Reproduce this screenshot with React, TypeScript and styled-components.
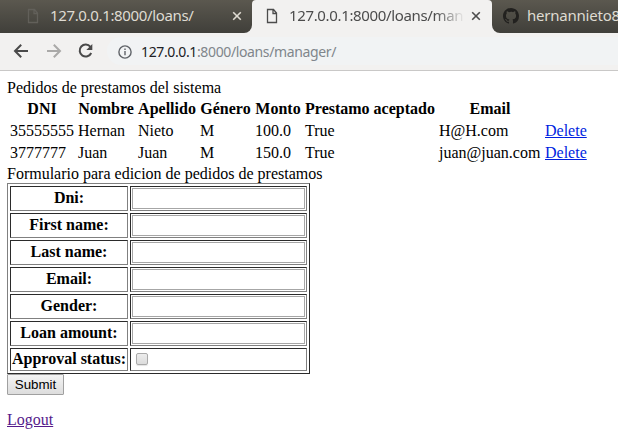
import React from "react";
import styled, { createGlobalStyle } from "styled-components";

const Global = createGlobalStyle`
  body { margin: 0; background: #fff; overflow: hidden; }
  #root { width: 618px; }
`;

const Window = styled.div`
  width: 618px;
  height: 448px;
  overflow: hidden;
  font: 16px/18px "Liberation Serif", serif;
  color: #000;
`;

const TabStrip = styled.div`
  display: flex;
  height: 33px;
  background: #f2f1f0;
`;

const Tab = styled.div<{ $width: number; $pad: number; $active?: boolean; $corners: string }>`
  box-sizing: border-box;
  flex: none;
  display: flex;
  align-items: center;
  width: ${(p) => p.$width}px;
  padding-left: ${(p) => p.$pad}px;
  padding-bottom: 1px;
  border-radius: ${(p) => p.$corners};
  background: ${(p) => (p.$active ? "#f2f1f0" : "linear-gradient(#5b584f, #403f3a)")};
  color: ${(p) => (p.$active ? "#4c4c4c" : "#dfdbd2")};
`;

const ActiveBack = styled.div`
  flex: none;
  display: flex;
  background: linear-gradient(#5b584f 0 8px, #f2f1f0 8px);
`;

const TabTitle = styled.span<{ $width: number; $spacing: number; $fade?: boolean }>`
  flex: none;
  width: ${(p) => p.$width}px;
  padding-bottom: 2px;
  overflow: hidden;
  white-space: nowrap;
  font: 15px/20px "Noto Sans", sans-serif;
  letter-spacing: ${(p) => p.$spacing}px;
  ${(p) => p.$fade && "mask-image: linear-gradient(to right, #000 146px, transparent 176px);"}
`;

const TabIcon = styled.svg<{ $gap: number }>`
  flex: none;
  margin-right: ${(p) => p.$gap}px;
`;

const Toolbar = styled.div`
  box-sizing: border-box;
  display: flex;
  align-items: center;
  height: 38px;
  padding: 0 0 1px 13px;
  border-bottom: 1px solid #c9c8c7;
  background: #f2f1f0;
`;

const NavIcon = styled.svg<{ $gap: number }>`
  flex: none;
  margin-right: ${(p) => p.$gap}px;
`;

const AddressBar = styled.div`
  display: flex;
  align-items: center;
  flex: 1;
  height: 28px;
  padding-left: 11px;
  border-radius: 14px 0 0 14px;
  background: #f1f3f4;
`;

const InfoIcon = styled.svg`
  flex: none;
  margin-top: 1px;
`;

const Address = styled.span`
  margin-left: 9px;
  padding-top: 2px;
  font: 14px/20px "Noto Sans", sans-serif;
  letter-spacing: -0.37px;
  color: #80868b;
`;

const Host = styled.span`
  color: #202124;
`;

const Page = styled.main`
  padding: 8px 7px 0;
`;

const LoanTable = styled.table`
  table-layout: fixed;
  width: 585px;
  border-spacing: 2px;
  td, th { padding: 1px; white-space: nowrap; }
`;

const Column = styled.col<{ $width: number }>`
  width: ${(p) => p.$width}px;
`;

const FormTable = styled.table`
  box-sizing: border-box;
  width: 303px;
  table-layout: fixed;
  border: 1px solid;
  border-color: #808080 #2b2b2b #2b2b2b #808080;
  border-spacing: 2px;
`;

const LabelCell = styled.th<{ $short?: boolean }>`
  box-sizing: border-box;
  width: 118px;
  height: ${(p) => (p.$short ? 23 : 25)}px;
  padding: ${(p) => (p.$short ? "0 0 1px" : "0 0 2px")};
  border: 1px solid;
  border-color: #2b2b2b #808080 #808080 #2b2b2b;
  line-height: 18px;
  white-space: nowrap;
`;

const FieldCell = styled.td`
  box-sizing: border-box;
  padding: 1px;
  border: 1px solid;
  border-color: #2b2b2b #808080 #808080 #2b2b2b;
`;

const TextField = styled.input`
  display: block;
  box-sizing: border-box;
  width: 173px;
  height: 21px;
  margin: 0;
  padding: 1px;
  border: 1px solid #a6a6a6;
  background: #fff;
  outline: none;
`;

const Checkbox = styled.input`
  appearance: none;
  display: block;
  box-sizing: border-box;
  width: 12px;
  height: 12px;
  margin: 0 0 1px 4px;
  border: 1px solid #aaa;
  border-radius: 2px;
  background: linear-gradient(#ededed, #dcdcdc);
  box-shadow: 0 1px 1px #e4e4e4;
`;

const Submit = styled.button`
  display: block;
  box-sizing: border-box;
  width: 57px;
  height: 21px;
  margin: 0 0 16px;
  padding: 0;
  border: 1px solid #a0a0a0;
  border-radius: 1px;
  background: linear-gradient(#f4f4f4, #dddddd);
  font: 13.333px/17px "Liberation Sans", sans-serif;
  color: #000;
`;

const Link = styled.a<{ $visited?: boolean }>`
  color: ${(p) => (p.$visited ? "#551a8b" : "#001fe0")};
  text-decoration: underline;
`;

const PageIcon = ({ color, gap }: { color: string; gap: number }) => (
  <TabIcon $gap={gap} width="12" height="16" viewBox="0 0 12 16" fill="none" stroke={color} strokeWidth="1.3">
    <path d="M1.5 1.5h6l3 3.5v9.5h-9zM7 1.5v4h3.5" />
  </TabIcon>
);

const CloseIcon = () => (
  <svg width="10" height="10" viewBox="0 0 10 10" stroke="currentColor" strokeWidth="1.6">
    <path d="M1.2 1.2l7.6 7.6M8.8 1.2l-7.6 7.6" />
  </svg>
);

const loans = [
  ["35555555", "Hernan", "Nieto", "M", "100.0", "True", "H@H.com"],
  ["3777777", "Juan", "Juan", "M", "150.0", "True", "juan@juan.com"],
];
const headings = ["DNI", "Nombre", "Apellido", "Género", "Monto", "Prestamo aceptado", "Email"];
const columnWidths = [66, 58, 60, 53, 48, 132, 104, 46];
const fields = ["Dni:", "First name:", "Last name:", "Email:", "Gender:", "Loan amount:"];

export default function App() {
  return (
    <Window>
      <Global />
      <TabStrip>
        <Tab $width={252} $pad={27} $corners="0 0 8px 0">
          <PageIcon color="#62605a" gap={11} />
          <TabTitle $width={182} $spacing={-0.35}>127.0.0.1:8000/loans/</TabTitle>
          <CloseIcon />
        </Tab>
        <ActiveBack>
          <Tab $width={240} $pad={14} $active $corners="4px 4px 0 0">
            <PageIcon color="#4c4c4c" gap={11} />
            <TabTitle $width={182} $spacing={-0.35} $fade>127.0.0.1:8000/loans/man</TabTitle>
            <CloseIcon />
          </Tab>
        </ActiveBack>
        <Tab $width={126} $pad={11} $corners="0 0 0 8px">
          <TabIcon $gap={8} width="16" height="16" viewBox="0 0 16 16" fill="#22211f">
            <path d="M8 0C3.58 0 0 3.58 0 8c0 3.54 2.29 6.53 5.47 7.59.4.07.55-.17.55-.38 0-.19-.01-.82-.01-1.49-2.01.37-2.53-.49-2.69-.94-.09-.23-.48-.94-.82-1.13-.28-.15-.68-.52-.01-.53.63-.01 1.08.58 1.23.82.72 1.21 1.87.87 2.33.66.07-.52.28-.87.51-1.07-1.78-.2-3.64-.89-3.64-3.95 0-.87.31-1.59.82-2.15-.08-.2-.36-1.02.08-2.12 0 0 .67-.21 2.2.82A7.65 7.65 0 0 1 8 3.86c.68 0 1.36.09 2 .27 1.53-1.04 2.2-.82 2.2-.82.44 1.1.16 1.92.08 2.12.51.56.82 1.27.82 2.15 0 3.07-1.87 3.75-3.65 3.95.29.25.54.73.54 1.48 0 1.07-.01 1.93-.01 2.2 0 .21.15.46.55.38A8.01 8.01 0 0 0 16 8c0-4.42-3.58-8-8-8z" />
          </TabIcon>
          <TabTitle $width={94} $spacing={-0.22}>hernannieto8</TabTitle>
        </Tab>
      </TabStrip>
      <Toolbar>
        <NavIcon $gap={18} width="16" height="16" viewBox="0 0 16 16" fill="none" stroke="#4a4a4a" strokeWidth="2">
          <path d="M15 8H2M8.2 1.8L2 8l6.2 6.2" />
        </NavIcon>
        <NavIcon $gap={15} width="16" height="16" viewBox="0 0 16 16" fill="none" stroke="#aaa9a8" strokeWidth="2">
          <path d="M0 8h12.8M6.8 1.8L13 8l-6.2 6.2" />
        </NavIcon>
        <NavIcon $gap={13} width="16" height="16" viewBox="0 0 16 16" fill="none" stroke="#4a4a4a" strokeWidth="2">
          <path d="M12.4 3.8A6 6 0 1 0 13.2 10" />
          <path d="M14.3 1v6h-6z" fill="#4a4a4a" stroke="none" />
        </NavIcon>
        <AddressBar>
          <InfoIcon width="14" height="14" viewBox="0 0 14 14" fill="none" stroke="#5f6368" strokeWidth="1.4">
            <circle cx="7" cy="7" r="6.1" />
            <path d="M7 6v4.3M7 3.4v1.5" />
          </InfoIcon>
          <Address><Host>127.0.0.1</Host>:8000/loans/manager/</Address>
        </AddressBar>
      </Toolbar>
      <Page>
        <div>Pedidos de prestamos del sistema</div>
        <LoanTable>
          <colgroup>
            {columnWidths.map((w, i) => <Column key={i} $width={w} />)}
          </colgroup>
          <thead>
            <tr>{headings.map((h) => <th key={h}>{h}</th>)}</tr>
          </thead>
          <tbody>
            {loans.map((row) => (
              <tr key={row[0]}>
                {row.map((v, i) => <td key={i}>{v}</td>)}
                <td><Link href="#">Delete</Link></td>
              </tr>
            ))}
          </tbody>
        </LoanTable>
        <div>Formulario para edicion de pedidos de prestamos</div>
        <FormTable>
          <tbody>
            {fields.map((f) => (
              <tr key={f}>
                <LabelCell>{f}</LabelCell>
                <FieldCell><TextField type="text" aria-label={f} /></FieldCell>
              </tr>
            ))}
            <tr>
              <LabelCell $short>Approval status:</LabelCell>
              <FieldCell><Checkbox type="checkbox" /></FieldCell>
            </tr>
          </tbody>
        </FormTable>
        <Submit type="button">Submit</Submit>
        <Link href="#" $visited>Logout</Link>
      </Page>
    </Window>
  );
}
